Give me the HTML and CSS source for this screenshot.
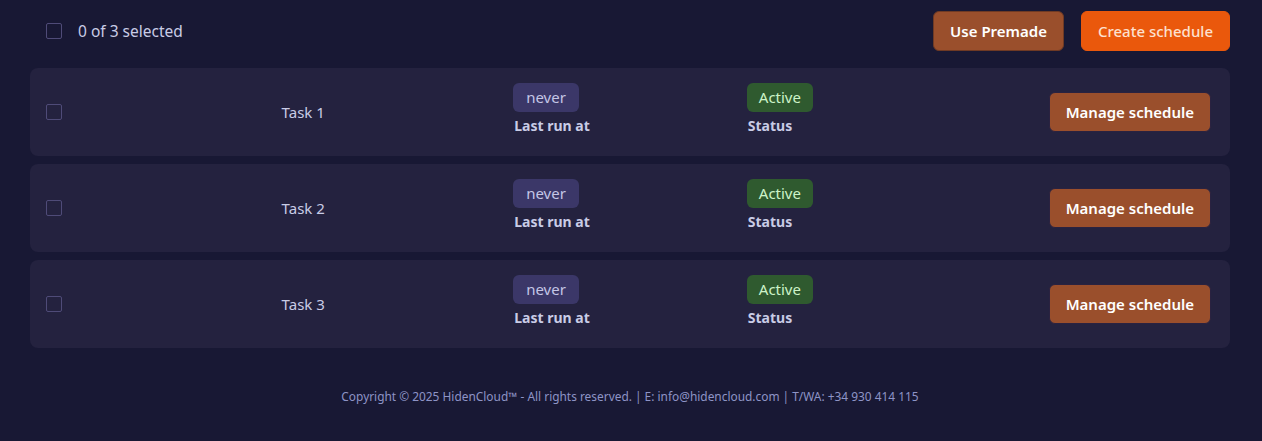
FILE: index.html
```html
<!DOCTYPE html>
<html lang="en">
<head>
<meta charset="utf-8">
<title>Schedules</title>
<link rel="stylesheet" href="styles.css">
</head>
<body>
<div class="page">
  <div class="toolbar">
    <label class="select-all"><span class="checkbox"></span><span class="sel-text">0 of 3 selected</span></label>
    <div class="actions">
      <button class="btn btn-brown">Use Premade</button>
      <button class="btn btn-orange">Create schedule</button>
    </div>
  </div>
  <div class="list">
    <div class="card">
      <div class="cell"><span class="checkbox"></span></div>
      <div class="cell name">Task 1</div>
      <div class="cell stack"><span class="badge badge-never">never</span><span class="label">Last run at</span></div>
      <div class="cell stack"><span class="badge badge-active">Active</span><span class="label">Status</span></div>
      <div class="cell end"><button class="btn btn-brown btn-manage">Manage schedule</button></div>
    </div>
    <div class="card">
      <div class="cell"><span class="checkbox"></span></div>
      <div class="cell name">Task 2</div>
      <div class="cell stack"><span class="badge badge-never">never</span><span class="label">Last run at</span></div>
      <div class="cell stack"><span class="badge badge-active">Active</span><span class="label">Status</span></div>
      <div class="cell end"><button class="btn btn-brown btn-manage">Manage schedule</button></div>
    </div>
    <div class="card">
      <div class="cell"><span class="checkbox"></span></div>
      <div class="cell name">Task 3</div>
      <div class="cell stack"><span class="badge badge-never">never</span><span class="label">Last run at</span></div>
      <div class="cell stack"><span class="badge badge-active">Active</span><span class="label">Status</span></div>
      <div class="cell end"><button class="btn btn-brown btn-manage">Manage schedule</button></div>
    </div>
  </div>
  <footer class="footer">Copyright © 2025 HidenCloud™ - All rights reserved. | E: info@hidencloud.com | T/WA: +34 930 414 115</footer>
</div>
</body>
</html>
```
FILE: styles.css
```css
* { box-sizing: border-box; }
html, body { margin: 0; padding: 0; }
body {
  background: #181834;
  font-family: "Noto Sans", "Open Sans", sans-serif;
  color: #c9cce6;
}
.page {
  margin: 0 32px 0 30px;
  padding-top: 11px;
}
.toolbar {
  display: flex;
  align-items: center;
  justify-content: space-between;
  padding-left: 16px;
  height: 40px;
}
.select-all {
  display: flex;
  align-items: center;
  gap: 16px;
}
.sel-text {
  font-size: 15.5px;
  color: #c9cce6;
}
.checkbox {
  display: inline-block;
  width: 16px;
  height: 16px;
  border: 1.5px solid #4f4b78;
  border-radius: 2px;
  background: transparent;
}
.actions {
  display: flex;
  gap: 17px;
}
.btn {
  height: 40px;
  border-radius: 6px;
  font-family: inherit;
  font-size: 15px;
  font-weight: 600;
  padding: 0 16px;
  cursor: pointer;
}
.btn-brown {
  background: #9a4f2c;
  border: 1px solid #6f3a24;
  color: #ffffff;
}
.btn-orange {
  background: #ea580c;
  border: 1px solid #ea580c;
  color: #fde0cf;
  font-weight: 500;
}
.list {
  margin-top: 17px;
  display: flex;
  flex-direction: column;
  gap: 8px;
}
.card {
  background: #24223f;
  border-radius: 8px;
  height: 88px;
  padding: 0 16px;
  display: grid;
  grid-template-columns: repeat(5, 1fr);
  align-items: center;
}
.cell { display: flex; align-items: center; }
.name {
  font-size: 15px;
  padding-left: 2px;
  color: #c9cce6;
}
.stack {
  flex-direction: column;
  align-items: flex-start;
  gap: 4px;
  margin-top: -6px;
}
.badge {
  display: inline-block;
  height: 29px;
  line-height: 29px;
  padding: 0 13px;
  border-radius: 6px;
  font-size: 15px;
}
.badge-never {
  background: #3b3768;
  color: #c4c6e6;
}
.badge-active {
  background: #2f5a2f;
  color: #cdf3c8;
  padding: 0 12px;
}
.label {
  font-size: 14px;
  font-weight: 700;
  color: #c9cce6;
  padding-left: 1px;
}
.end { justify-content: flex-end; padding-right: 3px; }
.btn-manage { padding: 0 16px; border-color: #2a2240; }
.footer {
  margin-top: 40px;
  text-align: center;
  font-size: 11.9px;
  color: #8e94c6;
}
```
